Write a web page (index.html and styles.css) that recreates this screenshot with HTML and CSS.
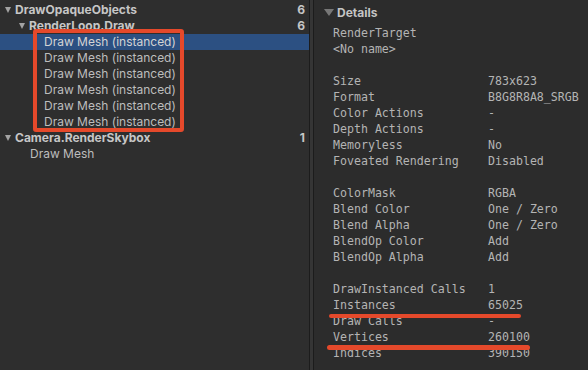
FILE: index.html
```html
<html lang="en">
<head>
  <meta charset="UTF-8" />
  <title>Frame Debugger</title>
  <link rel="stylesheet" href="styles.css">
</head>
<body>
  <div class="app">
    <div class="tree">
      <div class="row lvl0 group"><span class="tog"></span><span class="name">DrawOpaqueObjects</span><span class="count">6</span></div>
      <div class="row lvl1 group"><span class="tog"></span><span class="name">RenderLoop.Draw</span><span class="count">6</span></div>
      <div class="row lvl2 sel"><span class="name">Draw Mesh (instanced)</span></div>
      <div class="row lvl2"><span class="name">Draw Mesh (instanced)</span></div>
      <div class="row lvl2"><span class="name">Draw Mesh (instanced)</span></div>
      <div class="row lvl2"><span class="name">Draw Mesh (instanced)</span></div>
      <div class="row lvl2"><span class="name">Draw Mesh (instanced)</span></div>
      <div class="row lvl2"><span class="name">Draw Mesh (instanced)</span></div>
      <div class="row lvl0 group"><span class="tog"></span><span class="name">Camera.RenderSkybox</span><span class="count">1</span></div>
      <div class="row lvl1"><span class="name">Draw Mesh</span></div>
    </div>

    <div class="splitter"></div>

    <div class="details">
      <div class="head"><span class="tog"></span>Details</div>
      <div class="props">
        <div class="prop"><span>RenderTarget</span></div>
        <div class="prop"><span>&lt;No name&gt;</span></div>
        <div class="gap"></div>
        <div class="prop"><span class="key">Size</span><span>783x623</span></div>
        <div class="prop"><span class="key">Format</span><span>B8G8R8A8_SRGB</span></div>
        <div class="prop"><span class="key">Color Actions</span><span>-</span></div>
        <div class="prop"><span class="key">Depth Actions</span><span>-</span></div>
        <div class="prop"><span class="key">Memoryless</span><span>No</span></div>
        <div class="prop"><span class="key">Foveated Rendering</span><span>Disabled</span></div>
        <div class="gap"></div>
        <div class="prop"><span class="key">ColorMask</span><span>RGBA</span></div>
        <div class="prop"><span class="key">Blend Color</span><span>One / Zero</span></div>
        <div class="prop"><span class="key">Blend Alpha</span><span>One / Zero</span></div>
        <div class="prop"><span class="key">BlendOp Color</span><span>Add</span></div>
        <div class="prop"><span class="key">BlendOp Alpha</span><span>Add</span></div>
        <div class="gap"></div>
        <div class="prop"><span class="key">DrawInstanced Calls</span><span>1</span></div>
        <div class="prop"><span class="key">Instances</span><span>65025</span></div>
        <div class="prop"><span class="key">Draw Calls</span><span>-</span></div>
        <div class="prop"><span class="key">Vertices</span><span>260100</span></div>
        <div class="prop"><span class="key">Indices</span><span>390150</span></div>
      </div>
    </div>

    <!-- annotations drawn over the screenshot -->
    <div class="mark box"></div>
    <div class="mark line1"></div>
    <div class="mark line2"></div>
  </div>
</body>
</html>
```

FILE: styles.css
```css
body{margin:0;background:#2c2c2c;overflow:hidden;}
.app{position:relative;display:flex;width:588px;height:370px;font-family:Inter, "Noto Sans", sans-serif;font-size:12px;color:#bdbdbd;}

.tree{width:309px;padding-top:2px;background:#2e2e2e;}
.row{display:flex;align-items:center;height:16px;line-height:16px;white-space:nowrap;}
.row .name{flex:1;}
.row .count{padding-right:4px;}
.lvl0{padding-left:4px;}
.lvl1{padding-left:18px;}
.lvl2{padding-left:32px;}
.row:not(.group) .name{padding-left:12px;}
.group{font-weight:700;color:#c6c6c6;}
.sel{background:#2c5082;color:#d4d4d4;}
.tog{width:0;height:0;margin:0 4px 0 1px;border-left:3.5px solid transparent;border-right:3.5px solid transparent;border-top:6px solid #a3a3a3;}

.splitter{width:3px;border-left:1px solid #1c1c1c;border-right:1px solid #1c1c1c;background:#353535;}

.details{flex:1;background:#2c2c2c;}
.head{display:flex;align-items:center;height:24px;padding-left:10px;font-weight:700;color:#c4c4c4;}
.head .tog{margin:0 3px 0 0;border-left:5px solid transparent;border-right:5px solid transparent;border-top:7px solid #777;}
.props{padding:1px 0 0 19px;font-family:"DejaVu Sans Mono", monospace;font-size:11.6px;color:#b4b4b4;}
.prop{display:flex;height:16px;line-height:16px;white-space:nowrap;}
.prop .key{width:155px;}
.gap{height:16px;}

.mark{position:absolute;}
.box{left:33px;top:29px;width:143px;height:95px;border:4px solid #e5492b;border-radius:3px;}
.line1{left:329px;top:314px;width:192px;height:4px;border-radius:2px;background:#e5492b;}
.line2{left:327px;top:345px;width:203px;height:5px;border-radius:3px;background:#e5492b;}
```
